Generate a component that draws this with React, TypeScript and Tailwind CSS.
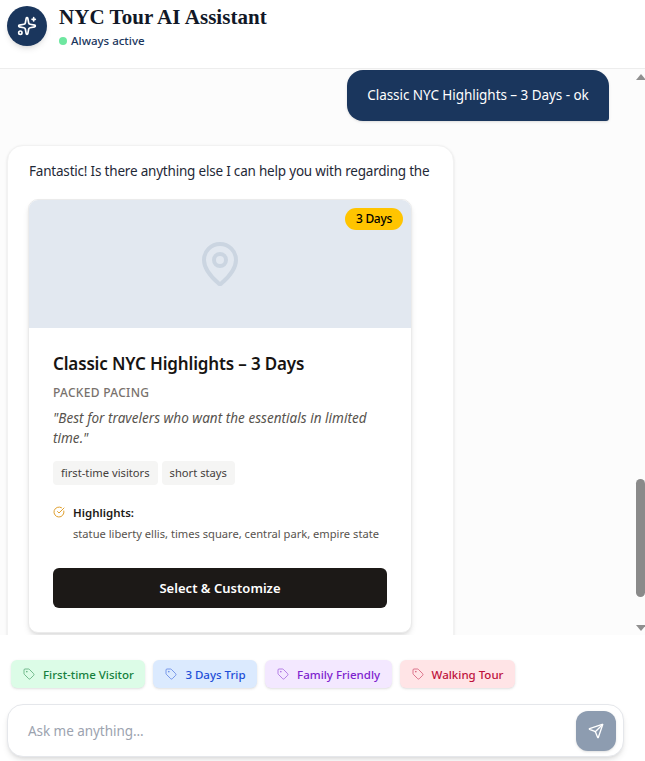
import { CircleCheckBig, MapPin, Send, Sparkles, Tag } from 'lucide-react'

const CHIPS = [
  { label: 'First-time Visitor', box: 'bg-[#dcfce7]', text: 'text-[#15803d]' },
  { label: '3 Days Trip', box: 'bg-[#dbeafe]', text: 'text-[#1d4ed8]' },
  { label: 'Family Friendly', box: 'bg-[#f3e8ff]', text: 'text-[#7e22ce]' },
  { label: 'Walking Tour', box: 'bg-[#ffe4e6]', text: 'text-[#be123c]' },
]

export default function App() {
  return (
    <div className="relative flex h-[761px] w-[645px] flex-col overflow-hidden bg-[#fcfcfc] font-['Noto_Sans',sans-serif]">
      {/* Header */}
      <header className="flex h-[69px] shrink-0 items-start gap-3 border-b border-[#ededed] bg-white pl-[7px] pt-[6px]">
        <div className="flex h-10 w-10 items-center justify-center rounded-full bg-[#1a365d] shadow-md">
          <Sparkles className="h-5 w-5 text-white" strokeWidth={2} />
        </div>
        <div className="-mt-px">
          <h1 className="font-['Liberation_Serif',serif] text-[21px] font-bold leading-6 tracking-[0.05px] text-[#111827]">NYC Tour AI Assistant</h1>
          <div className="mt-[4px] flex items-center gap-[4px]">
            <span className="h-2 w-2 rounded-full bg-[#6ee7a0]" />
            <span className="text-[11.5px] font-medium leading-4 text-[#1a365d]">Always active</span>
          </div>
        </div>
      </header>

      {/* Messages */}
      <main className="relative h-[566px] shrink-0 overflow-hidden pl-[7px]">
        <div className="flex justify-end pr-[36px] pt-px">
          <div className="flex h-[51px] w-[262px] items-center justify-center rounded-[16px] rounded-br-[3px] bg-[#1a365d] text-[13.5px] tracking-[-0.05px] text-white shadow-sm">
            Classic NYC Highlights – 3 Days - ok
          </div>
        </div>

        <div className="mt-[24px] w-[447px] rounded-[16px] border border-[#f2f2f2] bg-white px-[20px] pb-5 pt-[15px] shadow-sm">
          <p className="whitespace-nowrap pl-px text-[13.5px] leading-5 tracking-[-0.2px] text-[#1f2937]">Fantastic! Is there anything else I can help you with regarding the</p>

          <div className="mt-[18px] w-[384px] overflow-hidden rounded-[10px] border border-[#ebebeb] bg-white shadow-md">
            <div className="relative flex h-[128px] items-center justify-center bg-[#e2e8f0]">
              <MapPin className="h-12 w-12 text-[#cbd5e1]" strokeWidth={2} />
              <span className="absolute right-[8px] top-[8px] rounded-full bg-[#ffc400] px-[11px] py-[2px] text-[12px] font-medium leading-[18px] tracking-[-0.3px] text-black">3 Days</span>
            </div>
            <div className="px-6 pb-6 pt-6">
              <h2 className="whitespace-nowrap text-[17px] font-semibold leading-6 tracking-[-0.15px] text-[#171412]">Classic NYC Highlights – 3 Days</h2>
              <div className="mt-[9px] text-[12px] font-medium uppercase leading-4 tracking-[0.3px] text-[#78716c]">Packed Pacing</div>
              <p className="mt-[7px] text-[13.5px] italic leading-5 tracking-[0.03px] text-[#57534e]">"Best for travelers who want the essentials in limited time."</p>
              <div className="mt-[13px] flex gap-1">
                <span className="rounded-[4px] bg-[#f5f5f4] px-2 py-[3px] text-[11.2px] leading-[18px] text-[#44403c]">first-time visitors</span>
                <span className="rounded-[4px] bg-[#f5f5f4] px-2 py-[3px] text-[11.2px] leading-[18px] text-[#44403c]">short stays</span>
              </div>
              <div className="mt-[20px] flex gap-2">
                <CircleCheckBig className="mt-px h-3 w-3 shrink-0 text-[#e0a030]" strokeWidth={2} />
                <div>
                  <div className="text-[11.5px] font-semibold leading-4 text-[#1c1917]">Highlights:</div>
                  <div className="mt-[5px] whitespace-nowrap text-[11.15px] leading-4 text-[#57534e]">statue liberty ellis, times square, central park, empire state</div>
                </div>
              </div>
              <button className="mt-[26px] flex h-10 w-full items-center justify-center rounded-[6px] bg-[#1c1917] pt-px text-[13px] font-semibold tracking-[0.03px] text-white">
                Select &amp; Customize
              </button>
            </div>
          </div>
        </div>

        {/* Scrollbar */}
        <div className="absolute right-0 top-0 h-full w-[9px]">
          <div className="absolute left-0 top-[5px] h-0 w-0 border-x-[5px] border-b-[6px] border-x-transparent border-b-[#8f8f8f]" />
          <div className="absolute left-0 top-[410px] h-[118px] w-[9px] rounded-full bg-[#8a8a8a]" />
          <div className="absolute bottom-[4px] left-0 h-0 w-0 border-x-[5px] border-t-[6px] border-x-transparent border-t-[#8f8f8f]" />
        </div>
      </main>

      {/* Quick replies + input */}
      <footer className="flex-1 bg-white px-[7px] pt-[25px]">
        <div className="flex gap-2 pl-[4px]">
          {CHIPS.map(chip => (
            <span key={chip.label} className={`flex h-[28px] items-center gap-2 rounded-[6px] pl-3 pr-[11.5px] text-[11.5px] font-medium shadow-sm ${chip.box} ${chip.text}`}>
              <Tag className="-mt-px h-3 w-3 opacity-70" strokeWidth={1.5} />
              <span className="pt-px">{chip.label}</span>
            </span>
          ))}
        </div>
        <div className="mt-[16px] flex h-[53px] w-[617px] items-center justify-between rounded-[16px] border border-[#e5e7eb] bg-white pl-[20px] pr-[7px] shadow-md">
          <span className="pt-px text-[13.5px] tracking-[-0.05px] text-[#9ca3af]">Ask me anything...</span>
          <button className="flex h-10 w-10 items-center justify-center rounded-[12px] bg-[#8d9cb0] shadow-sm">
            <Send className="h-4 w-4 text-white" strokeWidth={2} />
          </button>
        </div>
      </footer>
    </div>
  )
}
